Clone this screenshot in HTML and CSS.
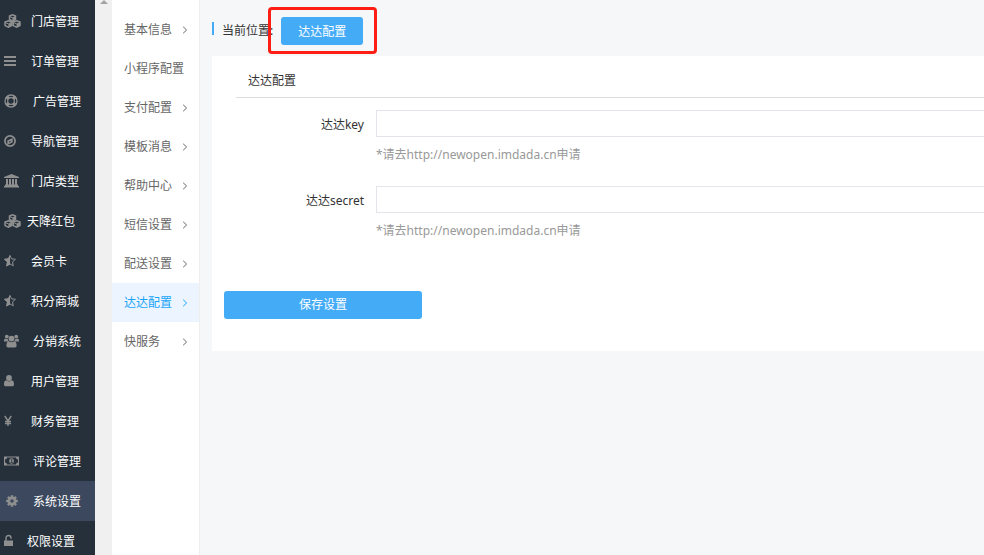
FILE: index.html
```
<!DOCTYPE html>
<html lang="zh-CN">

<head>
    <meta charset="UTF-8">
    <meta name="viewport" content="width=device-width, initial-scale=1.0">
    <title>达达配置</title>
    <link rel="stylesheet" href="styles.css">
</head>

<body>

    <!-- shared icons -->
    <svg class="sprite" aria-hidden="true">
        <symbol id="i-cubes" viewBox="0 0 17 14">
            <path d="M8.500 .8l3 1.300v3.300l-3 1.500-3-1.500V2.100z M4.400 6.700l3.300 1.400v3.500l-3.300 1.600L1 11.600V8.100z M12.600 6.700L16 8.100v3.500l-3.400 1.600-3.300-1.600V8.100z" fill="none" stroke="currentColor" stroke-width="1.500"/>
            <path d="M5.500 2.500l3 1.300 3-1.300M1 8.400l3.400 1.500 3.300-1.500M9.300 8.400l3.300 1.500L16 8.400" fill="none" stroke="currentColor"/>
            <path d="M8.500 3.800l3-1.300v3L8.500 7zM4.400 9.900l3.300-1.500v3.200l-3.300 1.600zM12.600 9.900L16 8.400v3.200l-3.400 1.600z" fill="currentColor"/>
        </symbol>
        <symbol id="i-bars" viewBox="0 0 12 14">
            <path d="M0 2h12v2H0zM0 6h12v2H0zM0 10h12v2H0z" fill="currentColor"/>
        </symbol>
        <symbol id="i-ring" viewBox="0 0 14 14">
            <circle cx="7" cy="7" r="6" fill="none" stroke="currentColor" stroke-width="1.300"/>
            <circle cx="7" cy="7" r="3.300" fill="none" stroke="currentColor" stroke-width="1.200"/>
            <path d="M2.500 2.500l2.300 2.300M11.500 2.500L9.200 4.800M2.500 11.500l2.300-2.300M11.500 11.500L9.200 9.200" stroke="currentColor" stroke-width="3.200"/>
        </symbol>
        <symbol id="i-compass" viewBox="0 0 12 14">
            <circle cx="6" cy="7" r="5.100" fill="none" stroke="currentColor" stroke-width="1.700"/>
            <path d="M8.700 4v4.200L3.300 11V6.500zM5.200 6.900v1.500l1.900-.9z" fill="currentColor" fill-rule="evenodd"/>
        </symbol>
        <symbol id="i-bank" viewBox="0 0 15 14">
            <path d="M7.500 0L15 3v1H0V3zM2 5h2v5.500H2zM5 5h2v5.500H5zM8 5h2v5.500H8zM11 5h2v5.500h-2zM1 10.500h13V12H1zM0 12h15v1.500H0z" fill="currentColor"/>
        </symbol>
        <symbol id="i-star" viewBox="0 0 12 14">
            <path d="M6 1.500l1.500 3.300 3.900.5-2.900 2.600.8 3.900L6 9.900l-3.300 1.900.8-3.900L.6 5.300l3.900-.5z" fill="none" stroke="currentColor"/>
            <path d="M6 .8v9.600l-3.700 2.100.8-4.400L0 5l4.200-.6z" fill="currentColor"/>
        </symbol>
        <symbol id="i-group" viewBox="0 0 15 14">
            <circle cx="2.800" cy="2.600" r="1.900" fill="currentColor"/>
            <circle cx="12.200" cy="2.600" r="1.900" fill="currentColor"/>
            <circle cx="7.500" cy="4.600" r="2.900" fill="currentColor"/>
            <path d="M0 7.500C0 5.500.5 4.500 1.300 4.500c.8.700 1.800.9 2.700.5 0 1.200.3 1.900.9 2.600H1C.3 7.600 0 7.700 0 7.500zM15 7.500c0-2-.5-3-1.300-3-.8.700-1.800.9-2.700.5 0 1.200-.3 1.900-.9 2.600H14c.7 0 1 .1 1-.1zM4.600 7.300c1.800 1.400 4 1.400 5.800 0 1.600.2 2.200 2 2.200 4.500 0 1-.7 1.700-1.800 1.700H4.200c-1.100 0-1.800-.7-1.800-1.700 0-2.500.6-4.300 2.200-4.500z" fill="currentColor"/>
        </symbol>
        <symbol id="i-user" viewBox="0 0 10 14">
            <circle cx="5" cy="4" r="2.900" fill="currentColor"/>
            <path d="M2.300 6.300c1.600 1.500 3.800 1.500 5.400 0C9.500 6.500 10 8.300 10 10.500c0 1-.7 1.800-1.800 1.800H1.800C.7 12.300 0 11.500 0 10.500c0-2.200.5-4 2.300-4.200z" fill="currentColor"/>
        </symbol>
        <symbol id="i-yen" viewBox="0 0 8 14">
            <path d="M.8 2L4 7l3.200-5M4 7v5M1 7.500h6M1 9.500h6" fill="none" stroke="currentColor" stroke-width="1.400"/>
        </symbol>
        <symbol id="i-money" viewBox="0 0 15 14">
            <path d="M0 2.500h15v9H0zM3 3.500A2 2 0 0 1 1 5.500v3a2 2 0 0 1 2 2h9a2 2 0 0 1 2-2v-3a2 2 0 0 1-2-2z" fill="currentColor" fill-rule="evenodd"/>
            <ellipse cx="7.500" cy="7" rx="2.300" ry="2.800" fill="currentColor"/>
            <path d="M6.800 5.800l.9-.4v3.200M6.500 8.600h2.200" fill="none" stroke="#25303b" stroke-width=".8"/>
        </symbol>
        <symbol id="i-cog" viewBox="0 0 12 14">
            <circle cx="6" cy="7" r="3.100" fill="none" stroke="currentColor" stroke-width="2.600"/>
            <path d="M6 1.200v2M6 10.800v2M.2 7h2M9.800 7h2M1.900 2.900l1.500 1.500M8.600 9.600l1.500 1.500M1.900 11.100l1.500-1.500M8.600 4.400l1.500-1.500" stroke="currentColor" stroke-width="2.400"/>
        </symbol>
        <symbol id="i-unlock" viewBox="0 0 9 14">
            <path d="M0 6.500h9V12H0z" fill="currentColor"/>
            <path d="M2 7V4a2.500 2.500 0 0 1 5 0v.8" fill="none" stroke="currentColor" stroke-width="1.400"/>
        </symbol>
        <symbol id="i-arrow" viewBox="0 0 6 8">
            <path d="M1.200 .8L4.600 4 1.200 7.200" fill="none" stroke="currentColor" stroke-width="1"/>
        </symbol>
    </svg>

    <div class="layout">
        <nav class="sidebar">
            <ul>
                <li><a href="#"><span class="icon"><svg width="17" height="14"><use href="#i-cubes"/></svg></span>门店管理</a></li>
                <li><a href="#"><span class="icon"><svg width="12" height="14"><use href="#i-bars"/></svg></span>订单管理</a></li>
                <li><a href="#"><span class="icon icon-wide"><svg width="14" height="14"><use href="#i-ring"/></svg></span>广告管理</a></li>
                <li><a href="#"><span class="icon"><svg width="12" height="14"><use href="#i-compass"/></svg></span>导航管理</a></li>
                <li><a href="#"><span class="icon"><svg width="15" height="14"><use href="#i-bank"/></svg></span>门店类型</a></li>
                <li><a href="#"><span class="icon icon-narrow"><svg width="17" height="14"><use href="#i-cubes"/></svg></span>天降红包</a></li>
                <li><a href="#"><span class="icon"><svg width="12" height="14"><use href="#i-star"/></svg></span>会员卡</a></li>
                <li><a href="#"><span class="icon"><svg width="12" height="14"><use href="#i-star"/></svg></span>积分商城</a></li>
                <li><a href="#"><span class="icon icon-wide"><svg width="15" height="14"><use href="#i-group"/></svg></span>分销系统</a></li>
                <li><a href="#"><span class="icon"><svg width="10" height="14"><use href="#i-user"/></svg></span>用户管理</a></li>
                <li><a href="#"><span class="icon"><svg width="8" height="14"><use href="#i-yen"/></svg></span>财务管理</a></li>
                <li><a href="#"><span class="icon icon-wide"><svg width="15" height="14"><use href="#i-money"/></svg></span>评论管理</a></li>
                <li class="active"><a href="#"><span class="icon icon-wide"><svg width="16" height="14"><use href="#i-cog"/></svg></span>系统设置</a></li>
                <li><a href="#"><span class="icon icon-narrow"><svg width="9" height="14"><use href="#i-unlock"/></svg></span>权限设置</a></li>
            </ul>
        </nav>

        <div class="scroll-track"><span class="scroll-up"></span></div>

        <nav class="submenu">
            <ul>
                <li><a href="#">基本信息<svg width="6" height="8"><use href="#i-arrow"/></svg></a></li>
                <li><a href="#">小程序配置</a></li>
                <li><a href="#">支付配置<svg width="6" height="8"><use href="#i-arrow"/></svg></a></li>
                <li><a href="#">模板消息<svg width="6" height="8"><use href="#i-arrow"/></svg></a></li>
                <li><a href="#">帮助中心<svg width="6" height="8"><use href="#i-arrow"/></svg></a></li>
                <li><a href="#">短信设置<svg width="6" height="8"><use href="#i-arrow"/></svg></a></li>
                <li><a href="#">配送设置<svg width="6" height="8"><use href="#i-arrow"/></svg></a></li>
                <li class="active"><a href="#">达达配置<svg width="6" height="8"><use href="#i-arrow"/></svg></a></li>
                <li><a href="#">快服务<svg width="6" height="8"><use href="#i-arrow"/></svg></a></li>
            </ul>
        </nav>

        <main class="content">
            <div class="location">
                <span class="location-label">当前位置:</span>
                <a href="#" class="btn btn-tab">达达配置</a>
            </div>

            <form class="panel">
                <h2>达达配置</h2>
                <div class="form-group">
                    <label for="dada-key">达达key</label>
                    <div class="field">
                        <input type="text" id="dada-key">
                        <p>*请去http://newopen.imdada.cn申请</p>
                    </div>
                </div>
                <div class="form-group">
                    <label for="dada-secret">达达secret</label>
                    <div class="field">
                        <input type="text" id="dada-secret">
                        <p>*请去http://newopen.imdada.cn申请</p>
                    </div>
                </div>
                <button type="submit" class="btn btn-save">保存设置</button>
            </form>
        </main>
    </div>

</body>

</html>
```
FILE: styles.css
```
* {
    margin: 0;
    padding: 0;
    box-sizing: border-box;
}

body {
    background: #f6f7f9;
    color: #333;
    font-family: "Noto Sans", "Noto Sans CJK SC", sans-serif;
    font-size: 12px;
    line-height: 20px;
    overflow: hidden;
}

ul {
    list-style: none;
}

a {
    color: inherit;
    text-decoration: none;
}

.sprite {
    display: none;
}

.layout {
    display: flex;
    height: 100vh;
}

/* main menu */
.sidebar {
    flex: 0 0 95px;
    padding-top: 1px;
    background: #25303b;
    color: #fff;
    overflow: hidden;
}

.sidebar a {
    display: flex;
    align-items: center;
    height: 40px;
    padding: 2px 0 0 4px;
    white-space: nowrap;
}

.sidebar .active {
    background: #3b485e;
}

.icon {
    display: flex;
    flex: 0 0 27px;
    padding-bottom: 2px;
    color: #8f8f8f;
}

.icon-narrow {
    flex-basis: 23px;
}

.icon-wide {
    flex-basis: 29px;
}

.scroll-track {
    flex: 0 0 17px;
    background: #f0f0f0;
}

.scroll-up {
    display: block;
    width: 8px;
    margin: 0 auto;
    border: 4px solid transparent;
    border-top: 0;
    border-bottom-color: #a3a3a3;
}

/* second level menu */
.submenu {
    flex: 0 0 88px;
    padding-top: 10px;
    background: #fff;
    border-right: 1px solid #eee;
    color: #666;
}

.submenu a {
    display: flex;
    align-items: center;
    justify-content: space-between;
    height: 39px;
    padding: 0 11px 0 12px;
    white-space: nowrap;
}

.submenu .active {
    background: #ecf5ff;
    color: #18a4fa;
}

/* page content */
.content {
    flex: 1;
    min-width: 0;
    padding-left: 12px;
}

.location {
    display: flex;
    align-items: flex-start;
    height: 56px;
    padding-top: 17px;
}

.location-label {
    display: flex;
    padding-top: 4px;
}

.location-label::before {
    content: "";
    width: 2px;
    height: 13px;
    margin: 1px 8px 0 0;
    background: #44abf7;
}

.btn {
    display: block;
    height: 28px;
    border: none;
    border-radius: 3px;
    background: #44abf7;
    color: #fff;
    font: inherit;
    line-height: 28px;
    text-align: center;
    cursor: pointer;
}

.btn-tab {
    position: relative;
    width: 82px;
    margin-left: 8px;
    padding-top: 1px;
}

/* highlight frame around the current tab */
.btn-tab::after {
    content: "";
    position: absolute;
    inset: -10px -14px -9px -13px;
    border: 3px solid #ff1e14;
    border-radius: 4px;
}

.btn-save {
    width: 198px;
    margin: 50px 0 0 12px;
}

.panel {
    padding-bottom: 32px;
    background: #fff;
}

.panel h2 {
    margin-left: 24px;
    padding: 15px 12px 6px;
    border-bottom: 1px solid #ddd;
    font-size: 12px;
    font-weight: normal;
}

.form-group {
    display: flex;
    margin-bottom: 9px;
    padding-top: 12px;
}

.form-group label {
    flex: 0 0 164px;
    padding: 5px 12px 0 0;
    text-align: right;
}

.field {
    flex: 1;
}

.field input {
    display: block;
    width: 100%;
    height: 27px;
    padding: 0 8px;
    border: 1px solid #e4e5ea;
    border-right: 0;
    font: inherit;
}

.field p {
    margin-top: 8px;
    color: #999;
}
```
